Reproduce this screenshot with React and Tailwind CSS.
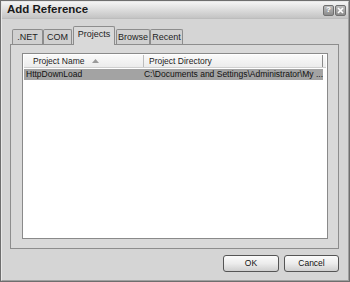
export default function App() {
  const font = { fontFamily: '"Liberation Sans", Arial, sans-serif' };
  const tabs = [
    { label: ".NET", w: 31 },
    { label: "COM", w: 29 },
    { label: "Projects", w: 40, active: true },
    { label: "Browse", w: 34 },
    { label: "Recent", w: 33 },
  ];
  return (
    <div style={font} className="w-[350px] h-[282px] bg-[#6e6e6e] p-px">
      <div className="w-full h-full bg-[#d5d5d5] border border-[#e8e8e8] border-r-[#a0a0a0] border-b-[#a0a0a0] flex flex-col">
        {/* title bar */}
        <div className="h-[17px] shrink-0 bg-gradient-to-b from-[#f4f4f4] via-[#dcdcdc] to-[#c4c4c4] flex items-center pl-[5px] pr-[2px] border-b border-[#bdbdbd]">
          <span className="text-[11.5px] font-bold text-[#1a1a1a] leading-none">Add Reference</span>
          <div className="ml-auto flex gap-[1px]">
            <div className="w-[11px] h-[11px] rounded-[2px] bg-gradient-to-b from-[#bdbdbd] to-[#8c8c8c] border border-[#707070] flex items-center justify-center text-[8px] font-bold text-white leading-none">?</div>
            <div className="w-[11px] h-[11px] rounded-[2px] bg-gradient-to-b from-[#bdbdbd] to-[#8c8c8c] border border-[#707070] flex items-center justify-center">
              <svg width="7" height="7" viewBox="0 0 7 7">
                <path d="M1 1L6 6M6 1L1 6" stroke="#fff" strokeWidth="1.6" />
              </svg>
            </div>
          </div>
        </div>
        {/* body */}
        <div className="flex-1 flex flex-col pl-[8px] pr-[9px] pt-[7px]">
          {/* tabs */}
          <div className="flex items-end h-[18px] pl-[2px] relative z-10">
            {tabs.map((t) =>
              t.active ? (
                <div
                  key={t.label}
                  className="h-[19px] -mb-px bg-[#d9d9d9] border border-[#8d8d8d] border-b-0 rounded-t-[2px] flex items-start justify-center pt-[3px] text-[9px] text-[#1e1e1e] leading-none mx-[1px]"
                  style={{ width: t.w + 2 }}
                >
                  {t.label}
                </div>
              ) : (
                <div
                  key={t.label}
                  className="h-[15px] bg-[#d0d0d0] border border-[#8d8d8d] border-b-0 rounded-t-[2px] flex items-center justify-center text-[9px] text-[#1e1e1e] leading-none"
                  style={{ width: t.w }}
                >
                  {t.label}
                </div>
              )
            )}
          </div>
          {/* panel */}
          <div className="h-[205px] border border-[#8d8d8d] bg-[#d9d9d9] pl-[11px] pr-[10px] pt-[8px] pb-[9px] flex">
            <div className="flex-1 border border-[#8a8a8a] bg-white flex flex-col">
              <div className="h-[13px] mt-px mx-px flex bg-gradient-to-b from-[#fafafa] to-[#ececec] border-b border-[#cfcfcf] text-[8.5px] text-[#222] leading-none">
                <div className="w-[120px] flex items-center pl-[9px] border-r border-[#bcbcbc]">
                  Project Name
                  <svg className="ml-[7px]" width="7" height="4" viewBox="0 0 7 4">
                    <path d="M0 4L3.5 0L7 4Z" fill="#9a9a9a" />
                  </svg>
                </div>
                <div className="w-[179px] flex items-center pl-[5px] border-r border-[#8a8a8a]">Project Directory</div>
              </div>
              <div className="h-[11px] mt-px mx-px w-[299px] bg-[#a3a3a3] flex text-[8.5px] text-[#111] leading-none items-center">
                <div className="w-[120px] pl-[2px]">HttpDownLoad</div>
                <div className="flex-1 pl-[5px] whitespace-nowrap">C:\Documents and Settings\Administrator\My ...</div>
              </div>
            </div>
          </div>
          {/* buttons */}
          <div className="flex justify-end gap-[5px] mt-[6px]">
            <button className="w-[56px] h-[17px] rounded-[3px] border border-[#555] bg-gradient-to-b from-[#fbfbfb] via-[#ececec] to-[#cfcfcf] text-[8.5px] text-[#111] leading-none">OK</button>
            <button className="w-[55px] h-[17px] rounded-[3px] border border-[#555] bg-gradient-to-b from-[#fbfbfb] via-[#ececec] to-[#cfcfcf] text-[8.5px] text-[#111] leading-none">Cancel</button>
          </div>
        </div>
      </div>
    </div>
  );
}
